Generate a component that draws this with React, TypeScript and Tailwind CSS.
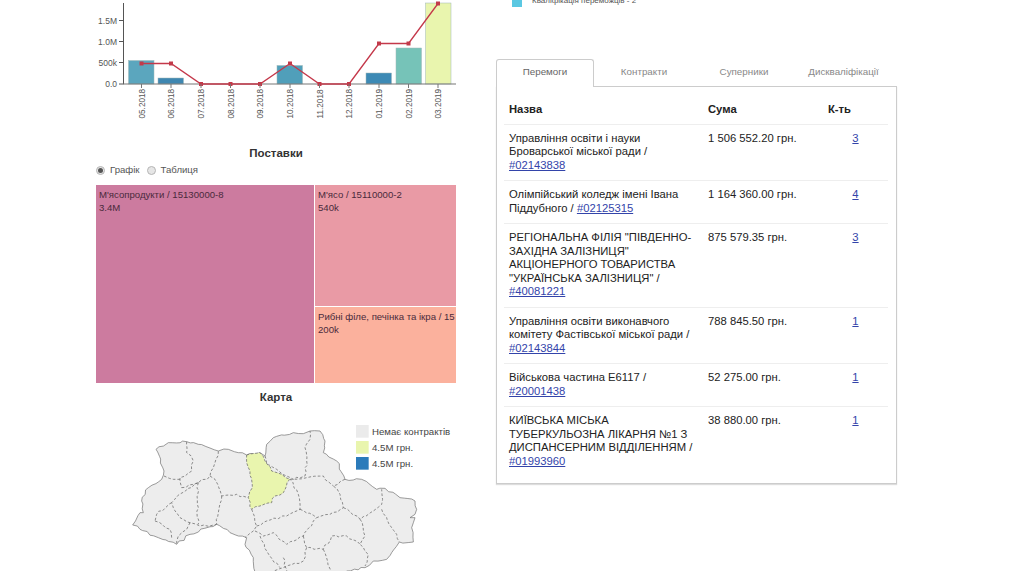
const FONT = "font-['Liberation_Sans',Arial,sans-serif]";

const months = ["05.2018", "06.2018", "07.2018", "08.2018", "09.2018", "10.2018", "11.2018", "12.2018", "01.2019", "02.2019", "03.2019"];
const pointX = [141.5, 171, 201, 230.5, 260, 290, 319.5, 349, 379, 408.5, 438];
const pointY = [63.5, 63.5, 84, 84, 84, 63.5, 84, 84, 43.5, 43.5, 3.5];

const bars = [
  { x: 128.5, w: 25.5, top: 60.5, fill: "#5ba6be" },
  { x: 158, w: 25.5, top: 78, fill: "#3f87b1" },
  { x: 277, w: 25.5, top: 65.5, fill: "#509fba" },
  { x: 366, w: 25.5, top: 73, fill: "#3d8ab5" },
  { x: 396, w: 25.5, top: 48, fill: "#76c3b8" },
  { x: 425.5, w: 25.5, top: 3, fill: "#e9f5ae" },
];

function SalesChart() {
  return (
    <svg width="360" height="128" viewBox="96 0 360 128" className="block">
      {bars.map((b) => (
        <rect key={b.x} x={b.x} y={b.top} width={b.w} height={84 - b.top} fill={b.fill} stroke="#9fb8b8" strokeWidth="0.5" />
      ))}
      <path d="M123.5 3V84" stroke="#555" strokeWidth="1" fill="none" />
      <path d="M123 84H456" stroke="#777" strokeWidth="1.2" fill="none" />
      {[
        ["1.5M", 20.5],
        ["1.0M", 41.5],
        ["500k", 62.5],
        ["0.0", 84],
      ].map(([t, y]) => (
        <g key={t as string}>
          <path d={`M119 ${y}H123.5`} stroke="#555" strokeWidth="1" />
          <text x="117" y={(y as number) + 3} textAnchor="end" fontSize="8.5" fill="#555" fontFamily="Liberation Sans, Arial, sans-serif">
            {t}
          </text>
        </g>
      ))}
      <polyline points={pointX.map((x, i) => `${x},${pointY[i]}`).join(" ")} fill="none" stroke="#c4384a" strokeWidth="1.3" />
      {pointX.map((x, i) => (
        <g key={months[i]}>
          <rect x={x - 2} y={pointY[i] - 2} width="4" height="4" fill="#c23a4a" />
          <path d={`M${x} 84V88`} stroke="#777" strokeWidth="1" />
          <text
            transform={`translate(${x + 3} 118.5) rotate(-90)`}
            fontSize="8.2"
            fill="#555"
            fontFamily="Liberation Sans, Arial, sans-serif"
          >
            {months[i]}
          </text>
        </g>
      ))}
    </svg>
  );
}

// small deterministic jitter so map borders look like the traced regions
function wiggle(pts: number[][], closed = false) {
  let seed = pts.length * 7 + pts[0][0];
  const rnd = () => {
    seed = (seed * 9301 + 49297) % 233280;
    return seed / 233280 - 0.5;
  };
  const out: string[] = [];
  const list = closed ? [...pts, pts[0]] : pts;
  list.forEach((p, i) => {
    if (i === 0) {
      out.push(`M${p[0]} ${p[1]}`);
      return;
    }
    const q = list[i - 1];
    const d = Math.hypot(p[0] - q[0], p[1] - q[1]);
    const n = Math.max(1, Math.floor(d / 11));
    for (let k = 1; k < n; k++) {
      const t = k / n;
      out.push(`L${(q[0] + (p[0] - q[0]) * t + rnd() * 7).toFixed(1)} ${(q[1] + (p[1] - q[1]) * t + rnd() * 7).toFixed(1)}`);
    }
    out.push(`L${p[0]} ${p[1]}`);
  });
  return out.join("") + (closed ? "Z" : "");
}

const outline = [
  [128, 432], [150, 395], [160, 395], [155, 360], [175, 320], [215, 295], [222, 270], [198, 205], [235, 185], [290, 182], [325, 190], [385, 210], [415, 205], [445, 215], [470, 222], [510, 215], [525, 225], [530, 190], [550, 170], [610, 155], [640, 158], [660, 150], [690, 150], [705, 180], [700, 215], [740, 240], [765, 295], [815, 295], [860, 325], [885, 322], [930, 350], [975, 360], [980, 385], [975, 400], [960, 410], [975, 410], [965, 440], [970, 483], [928, 483], [890, 535], [850, 540], [825, 560], [770, 570], [760, 600], [500, 600], [495, 573], [490, 530], [465, 490], [470, 470], [420, 455], [380, 430], [300, 460], [260, 490], [205, 470], [150, 445],
];

const kyiv = [
  [470, 222], [510, 215], [525, 240], [545, 270], [575, 280], [600, 295], [580, 335], [555, 345], [545, 365], [510, 375], [485, 385], [475, 350], [487, 320], [480, 270], [470, 245],
];

const inner = [
  [[290, 182], [290, 215], [310, 240], [305, 270], [270, 290], [275, 320]],
  [[222, 285], [250, 295], [270, 295]],
  [[275, 320], [325, 305], [360, 285], [370, 260], [385, 210]],
  [[360, 285], [375, 295], [395, 345], [440, 340], [475, 350]],
  [[325, 305], [322, 370], [325, 430]],
  [[325, 305], [262, 345], [245, 365], [250, 380], [270, 410], [300, 425], [330, 435], [380, 430]],
  [[245, 365], [200, 400], [195, 420]],
  [[195, 420], [240, 445], [245, 470]],
  [[300, 425], [290, 445], [265, 465], [260, 490]],
  [[395, 345], [385, 395], [380, 430]],
  [[485, 385], [500, 435], [490, 450], [465, 470]],
  [[500, 435], [530, 420], [590, 405], [630, 385], [625, 340], [600, 295]],
  [[630, 385], [680, 410], [720, 400], [760, 380], [750, 340], [730, 315], [765, 295]],
  [[600, 295], [650, 290], [700, 285], [730, 315]],
  [[525, 225], [530, 250], [560, 265], [610, 295], [645, 285], [650, 240], [645, 200], [660, 175], [660, 150]],
  [[495, 450], [520, 465], [550, 455], [590, 490], [640, 465], [670, 420], [680, 410]],
  [[640, 465], [650, 500], [700, 505], [725, 465], [770, 465], [810, 490]],
  [[760, 380], [810, 415], [850, 390], [875, 370], [875, 325]],
  [[810, 415], [825, 465], [810, 490], [835, 520], [825, 555]],
  [[875, 385], [905, 440], [920, 460], [928, 483]],
  [[510, 465], [530, 510], [570, 560]],
  [[650, 500], [640, 540], [580, 560], [540, 575]],
  [[700, 505], [725, 575]],
  [[580, 530], [590, 575]],
];

const legend = [
  { y: 132, fill: "#ebebeb", label: "Немає контрактів" },
  { y: 180, fill: "#e9f5ae", label: "4.5M грн." },
  { y: 228, fill: "#2b7bba", label: "4.5M грн." },
];

// viewBox is in 3x units, measured off the zoomed reference
function UkraineMap() {
  return (
    <svg width="380" height="161" viewBox="0 90 1140 483" className="block ml-[-6px] mt-[7px]">
      <path d={wiggle(outline, true)} fill="#ededed" stroke="#777" strokeWidth="2.2" strokeLinejoin="round" />
      {inner.map((line, i) => (
        <path key={i} d={wiggle(line)} fill="none" stroke="#666" strokeWidth="2.2" strokeDasharray="8 6" />
      ))}
      <path d={wiggle(kyiv, true)} fill="#e9f5ae" stroke="#666" strokeWidth="2.2" strokeDasharray="8 5" />
      {legend.map((l) => (
        <g key={l.y}>
          <rect x="798" y={l.y} width="38" height="38" fill={l.fill} />
          <text x="846" y={l.y + 29} fontSize="29" fill="#444" fontFamily="Liberation Sans, Arial, sans-serif">
            {l.label}
          </text>
        </g>
      ))}
    </svg>
  );
}

function Radio({ on, label }: { on?: boolean; label: string }) {
  return (
    <span className="flex items-center gap-[5px]">
      <span className="w-[9px] h-[9px] rounded-full border border-[#b5b5b5] bg-[#e6e6e6] flex items-center justify-center">
        {on && <span className="w-[5px] h-[5px] rounded-full bg-[#555]" />}
      </span>
      {label}
    </span>
  );
}

const rows = [
  { name: "Управління освіти і науки Броварської міської ради /", id: "#02143838", sum: "1 506 552.20 грн.", n: 3 },
  { name: "Олімпійський коледж імені Івана Піддубного /", id: "#02125315", sum: "1 164 360.00 грн.", n: 4 },
  { name: 'РЕГІОНАЛЬНА ФІЛІЯ "ПІВДЕННО-ЗАХІДНА ЗАЛІЗНИЦЯ" АКЦІОНЕРНОГО ТОВАРИСТВА "УКРАЇНСЬКА ЗАЛІЗНИЦЯ" /', id: "#40081221", sum: "875 579.35 грн.", n: 3 },
  { name: "Управління освіти виконавчого комітету Фастівської міської ради /", id: "#02143844", sum: "788 845.50 грн.", n: 1 },
  { name: "Військова частина Е6117 /", id: "#20001438", sum: "52 275.00 грн.", n: 1 },
  { name: "КИЇВСЬКА МІСЬКА ТУБЕРКУЛЬОЗНА ЛІКАРНЯ №1 З ДИСПАНСЕРНИМ ВІДДІЛЕННЯМ /", id: "#01993960", sum: "38 880.00 грн.", n: 1 },
];

export default function App() {
  return (
    <div className={`${FONT} w-[1024px] h-[571px] overflow-hidden bg-white flex pl-[96px] gap-[40px] text-[#333]`}>
      {/* Left column */}
      <div className="w-[360px] shrink-0">
        <SalesChart />
        <h3 className="mt-[18px] text-[11.5px] leading-[14px] font-bold text-center">Поставки</h3>
        <div className="mt-[4px] flex gap-[7px] text-[9.6px] leading-[12px] text-[#555]">
          <Radio on label="Графік" />
          <Radio label="Таблиця" />
        </div>
        <div className="mt-[9px] h-[198px] flex gap-px text-[9.6px] leading-[13px] text-[#4a2a3c]">
          <div className="w-[218px] bg-[#cc7b9f] p-[3px]">
            М'ясопродукти / 15130000-8
            <br />
            3.4M
          </div>
          <div className="flex-1 min-w-0 flex flex-col gap-px">
            <div className="h-[121px] bg-[#e99aa5] p-[3px]">
              М'ясо / 15110000-2
              <br />
              540k
            </div>
            <div className="flex-1 bg-[#fbb19d] p-[3px] whitespace-nowrap overflow-hidden">
              Рибні філе, печінка та ікра / 15
              <br />
              200k
            </div>
          </div>
        </div>
        <h3 className="mt-[7px] text-[11.5px] leading-[14px] font-bold text-center">Карта</h3>
        <UkraineMap />
      </div>

      {/* Right column */}
      <div className="w-[401px] shrink-0 relative">
        <div className="flex items-center gap-[10px] ml-[16px] mt-[-5px] h-[12px] text-[8px] leading-[12px] text-[#555]">
          <span className="w-[10px] h-[12px] bg-[#5bc8e2]" />
          Кваліфікація переможців - 2
        </div>
        <div className="mt-[52px] flex h-[28px] text-[9.8px] text-[#888]">
          <div className="w-[98px] h-[28px] pb-[2px] flex items-center justify-center text-[#666] bg-white border border-b-0 border-[#ccc] rounded-t-[3px] relative z-10">
            Перемоги
          </div>
          <div className="w-[100px] pb-[2px] flex items-center justify-center">Контракти</div>
          <div className="w-[100px] pb-[2px] flex items-center justify-center">Суперники</div>
          <div className="w-[99px] pb-[2px] flex items-center justify-center whitespace-nowrap">Дискваліфікації</div>
        </div>
        <div className="mt-[-1px] h-[398px] border border-[#ccc] shadow-[0_1px_1px_#ddd] pt-[13px] px-[7px]">
          <table className="table-fixed w-[384px] text-[11.25px] leading-[13.5px] text-[#222]">
            <colgroup>
              <col className="w-[199px]" />
              <col className="w-[120px]" />
              <col className="w-[65px]" />
            </colgroup>
            <thead>
              <tr className="h-[24px] text-left">
                <th className="px-[5px] font-bold align-top pt-[3px]">Назва</th>
                <th className="px-[5px] font-bold align-top pt-[3px]">Сума</th>
                <th className="px-[5px] font-bold align-top pt-[3px]">К-ть</th>
              </tr>
            </thead>
            <tbody>
              {rows.map((r) => (
                <tr key={r.id} className="border-t border-[#eee] align-top">
                  <td className="px-[5px] pt-[7px] pb-[8px]">
                    {r.name} <a className="text-[#3344aa] underline">{r.id}</a>
                  </td>
                  <td className="px-[5px] pt-[7px] pb-[8px]">{r.sum}</td>
                  <td className="px-[5px] pt-[7px] pb-[8px] text-center">
                    <a className="text-[#3344aa] underline">{r.n}</a>
                  </td>
                </tr>
              ))}
            </tbody>
          </table>
        </div>
      </div>
    </div>
  );
}
